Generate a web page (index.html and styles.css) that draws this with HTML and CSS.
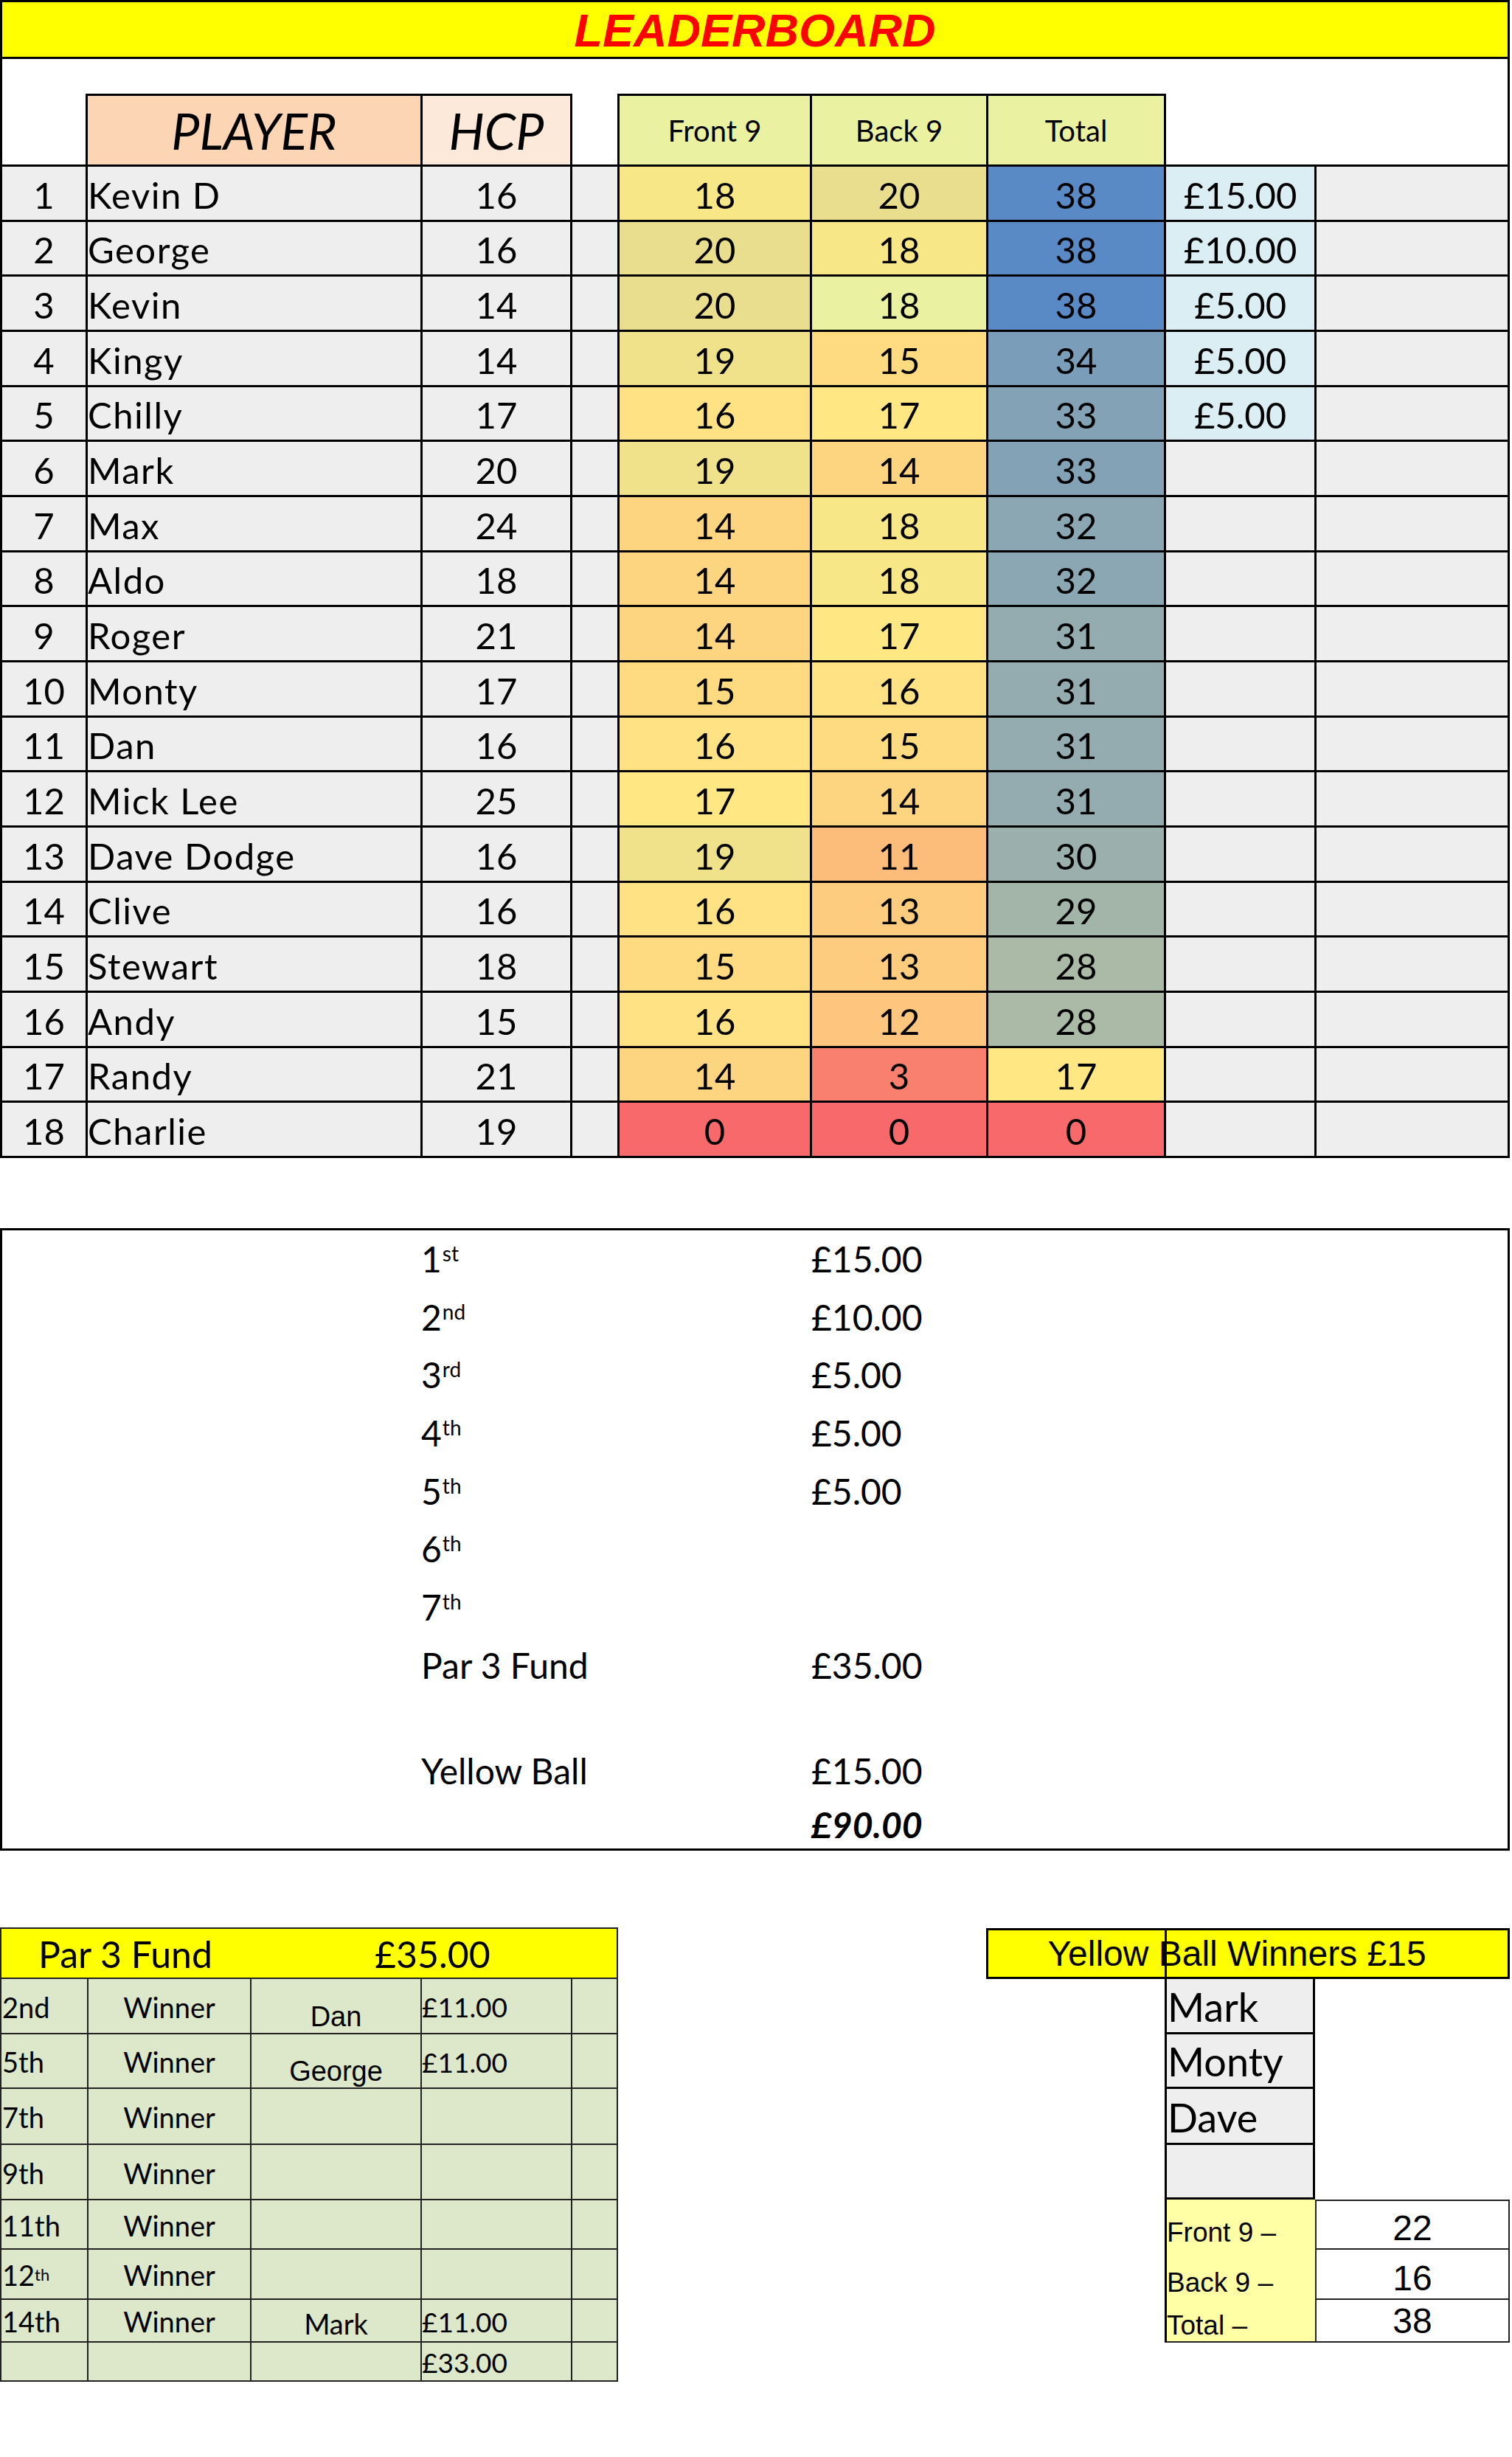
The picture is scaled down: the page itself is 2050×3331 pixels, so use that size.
FILE: index.html
```html
<!DOCTYPE html>
<html lang="en">
<head>
<meta charset="utf-8">
<title>Leaderboard</title>
<link rel="stylesheet" href="styles.css">
</head>
<body>
<div class="page">
  <section class="board">
    <div class="title">LEADERBOARD</div>
    <div class="head">
      <div></div>
      <div class="h-player">PLAYER</div>
      <div class="h-hcp">HCP</div>
      <div class="h-line"></div>
      <div class="h-score">Front 9</div>
      <div class="h-score">Back 9</div>
      <div class="h-score">Total</div>
      <div class="h-line"></div>
      <div></div>
    </div>
    <div class="rows">
      <div class="row"><div>1</div><div class="name">Kevin D</div><div>16</div><div></div><div class="s18">18</div><div class="s20">20</div><div class="t38">38</div><div class="prize">£15.00</div><div></div></div>
      <div class="row"><div>2</div><div class="name">George</div><div>16</div><div></div><div class="s20">20</div><div class="s18">18</div><div class="t38">38</div><div class="prize">£10.00</div><div></div></div>
      <div class="row"><div>3</div><div class="name">Kevin</div><div>14</div><div></div><div class="s20">20</div><div class="s18g">18</div><div class="t38">38</div><div class="prize">£5.00</div><div></div></div>
      <div class="row"><div>4</div><div class="name">Kingy</div><div>14</div><div></div><div class="s19">19</div><div class="s15">15</div><div class="t34">34</div><div class="prize">£5.00</div><div></div></div>
      <div class="row"><div>5</div><div class="name">Chilly</div><div>17</div><div></div><div class="s16">16</div><div class="s17">17</div><div class="t33">33</div><div class="prize">£5.00</div><div></div></div>
      <div class="row"><div>6</div><div class="name">Mark</div><div>20</div><div></div><div class="s19">19</div><div class="s14">14</div><div class="t33">33</div><div></div><div></div></div>
      <div class="row"><div>7</div><div class="name">Max</div><div>24</div><div></div><div class="s14">14</div><div class="s18">18</div><div class="t32">32</div><div></div><div></div></div>
      <div class="row"><div>8</div><div class="name">Aldo</div><div>18</div><div></div><div class="s14">14</div><div class="s18">18</div><div class="t32">32</div><div></div><div></div></div>
      <div class="row"><div>9</div><div class="name">Roger</div><div>21</div><div></div><div class="s14">14</div><div class="s17">17</div><div class="t31">31</div><div></div><div></div></div>
      <div class="row"><div>10</div><div class="name">Monty</div><div>17</div><div></div><div class="s15">15</div><div class="s16">16</div><div class="t31">31</div><div></div><div></div></div>
      <div class="row"><div>11</div><div class="name">Dan</div><div>16</div><div></div><div class="s16">16</div><div class="s15">15</div><div class="t31">31</div><div></div><div></div></div>
      <div class="row"><div>12</div><div class="name">Mick Lee</div><div>25</div><div></div><div class="s17">17</div><div class="s14">14</div><div class="t31">31</div><div></div><div></div></div>
      <div class="row"><div>13</div><div class="name">Dave Dodge</div><div>16</div><div></div><div class="s19">19</div><div class="s11">11</div><div class="t30">30</div><div></div><div></div></div>
      <div class="row"><div>14</div><div class="name">Clive</div><div>16</div><div></div><div class="s16">16</div><div class="s13">13</div><div class="t29">29</div><div></div><div></div></div>
      <div class="row"><div>15</div><div class="name">Stewart</div><div>18</div><div></div><div class="s15">15</div><div class="s13">13</div><div class="t28">28</div><div></div><div></div></div>
      <div class="row"><div>16</div><div class="name">Andy</div><div>15</div><div></div><div class="s16">16</div><div class="s12">12</div><div class="t28">28</div><div></div><div></div></div>
      <div class="row"><div>17</div><div class="name">Randy</div><div>21</div><div></div><div class="s14">14</div><div class="s3">3</div><div class="t17">17</div><div></div><div></div></div>
      <div class="row"><div>18</div><div class="name">Charlie</div><div>19</div><div></div><div class="s0">0</div><div class="s0">0</div><div class="s0">0</div><div></div><div></div></div>
    </div>
  </section>

  <section class="summary">
    <div class="sum-row"><span>1<sup>st</sup></span><span>£15.00</span></div>
    <div class="sum-row"><span>2<sup>nd</sup></span><span>£10.00</span></div>
    <div class="sum-row"><span>3<sup>rd</sup></span><span>£5.00</span></div>
    <div class="sum-row"><span>4<sup>th</sup></span><span>£5.00</span></div>
    <div class="sum-row"><span>5<sup>th</sup></span><span>£5.00</span></div>
    <div class="sum-row"><span>6<sup>th</sup></span><span></span></div>
    <div class="sum-row"><span>7<sup>th</sup></span><span></span></div>
    <div class="sum-row"><span>Par 3 Fund</span><span>£35.00</span></div>
    <div class="sum-gap"></div>
    <div class="sum-row"><span>Yellow Ball</span><span>£15.00</span></div>
    <div class="sum-row sum-total"><span></span><span>£90.00</span></div>
  </section>

  <section class="bottom">
    <div class="p3">
      <div class="p3-head"><span class="p3-label">Par 3 Fund</span><span>£35.00</span></div>
      <div class="p3-row r1"><div class="hole">2nd</div><div class="win">Winner</div><div class="who arial">Dan</div><div class="amt">£11.00</div><div></div></div>
      <div class="p3-row r2"><div class="hole">5th</div><div class="win">Winner</div><div class="who arial">George</div><div class="amt">£11.00</div><div></div></div>
      <div class="p3-row r3"><div class="hole">7th</div><div class="win">Winner</div><div></div><div></div><div></div></div>
      <div class="p3-row r4"><div class="hole">9th</div><div class="win">Winner</div><div></div><div></div><div></div></div>
      <div class="p3-row r5"><div class="hole">11th</div><div class="win">Winner</div><div></div><div></div><div></div></div>
      <div class="p3-row r6"><div class="hole">12<sup>th</sup></div><div class="win">Winner</div><div></div><div></div><div></div></div>
      <div class="p3-row r7"><div class="hole">14th</div><div class="win">Winner</div><div class="who">Mark</div><div class="amt">£11.00</div><div></div></div>
      <div class="p3-row r8"><div></div><div></div><div></div><div class="amt">£33.00</div><div></div></div>
    </div>

    <div class="yb">
      <div class="yb-head">Yellow Ball Winners £15</div>
      <div class="yb-row n1"><div></div><div class="yb-name">Mark</div><div></div></div>
      <div class="yb-row n2"><div></div><div class="yb-name">Monty</div><div></div></div>
      <div class="yb-row n3"><div></div><div class="yb-name">Dave</div><div></div></div>
      <div class="yb-row n4"><div></div><div class="yb-name"></div><div></div></div>
      <div class="yb-row v1"><div></div><div class="yb-lab">Front 9 –</div><div class="yb-val first">22</div></div>
      <div class="yb-row v2"><div></div><div class="yb-lab">Back 9 –</div><div class="yb-val">16</div></div>
      <div class="yb-row v3"><div></div><div class="yb-lab last">Total –</div><div class="yb-val">38</div></div>
    </div>
  </section>
</div>
</body>
</html>
```

FILE: styles.css
```css
html, body {
  margin: 0;
  padding: 0;
  background: #ffffff;
}

body {
  font-family: Lato, "Liberation Sans", sans-serif;
  color: #000;
}

.page {
  width: 2047px;
}

/* ---------- Leaderboard ---------- */
.board {
  border-left: 3px solid #000;
  border-right: 3px solid #000;
}

.title {
  height: 80px;
  box-sizing: border-box;
  border-top: 3px solid #000;
  border-bottom: 3px solid #000;
  background: #ffff00;
  color: #ff0000;
  font-family: "Liberation Sans", Arial, sans-serif;
  font-style: italic;
  font-weight: bold;
  font-size: 63px;
  display: flex;
  align-items: center;
  justify-content: center;
  padding-top: 2px;
}

.head,
.row {
  display: grid;
  grid-template-columns: 113px 454px 203px 64px 261px 239px 241px 204px 1fr;
}

.head {
  height: 143px;
  align-items: end;
}

.head > div {
  height: 96px;
  box-sizing: border-box;
  display: flex;
  align-items: center;
  justify-content: center;
  white-space: nowrap;
}

.h-player,
.h-hcp {
  border-top: 3px solid #000;
  border-left: 3px solid #000;
  font-style: italic;
  font-size: 68px;
}

.h-player { background: #fcd5b4; }
.h-hcp { background: #fde9d9; }

.h-line {
  border-left: 3px solid #000;
}

.h-score {
  border-top: 3px solid #000;
  border-left: 3px solid #000;
  background: #eaf2a2;
  font-size: 40px;
}

.rows {
  border-top: 3px solid #000;
}

.row {
  height: 74.67px;
  box-sizing: border-box;
  border-bottom: 3px solid #000;
}

.row > div {
  display: flex;
  align-items: center;
  justify-content: center;
  padding-top: 4px;
  box-sizing: border-box;
  background: #eeeeee;
  font-size: 49px;
  white-space: nowrap;
}

.row > div + div {
  border-left: 3px solid #000;
}

.row > .name {
  justify-content: flex-start;
  letter-spacing: 1.5px;
}

.row > .prize {
  background: #daeef3;
}

/* colour scale: front / back 9 */
.row > .s20 { background: #e9de8d; }
.row > .s19 { background: #f0e28a; }
.row > .s18 { background: #f8e787; }
.row > .s18g { background: #eaf2a1; }
.row > .s17 { background: #ffe884; }
.row > .s16 { background: #fee283; }
.row > .s15 { background: #feda81; }
.row > .s14 { background: #fdd480; }
.row > .s13 { background: #fdcc7e; }
.row > .s12 { background: #fdc57d; }
.row > .s11 { background: #fcbd7b; }
.row > .s3 { background: #f9806f; }
.row > .s0 { background: #f8696b; }

/* colour scale: total */
.row > .t38 { background: #5a8ac6; }
.row > .t34 { background: #7a9db9; }
.row > .t33 { background: #83a2b6; }
.row > .t32 { background: #8ba7b3; }
.row > .t31 { background: #94abaf; }
.row > .t30 { background: #9bb0ac; }
.row > .t29 { background: #a3b5a9; }
.row > .t28 { background: #abbaa6; }
.row > .t17 { background: #ffe784; }

/* ---------- Prize summary ---------- */
.summary {
  margin-top: 95px;
  height: 844px;
  box-sizing: border-box;
  border: 3px solid #000;
  padding-left: 568px;
  font-size: 48px;
}

.sum-row {
  display: grid;
  grid-template-columns: 529px auto;
  height: 78.7px;
  line-height: 78.7px;
  white-space: nowrap;
}

.sum-row sup {
  font-size: 28px;
  line-height: 0;
  vertical-align: 15px;
  margin-left: 1px;
}

.sum-gap {
  height: 64.5px;
}

.sum-total {
  margin-top: -6px;
  font-weight: bold;
  font-style: italic;
}

/* ---------- Bottom tables ---------- */
.bottom {
  margin-top: 104px;
  display: flex;
  align-items: flex-start;
}

.p3 {
  width: 838px;
  box-sizing: border-box;
  border: 2px solid #222;
  border-bottom: none;
}

.p3-head {
  height: 68px;
  box-sizing: border-box;
  border-bottom: 2px solid #222;
  background: #ffff00;
  display: flex;
  align-items: center;
  padding-left: 50px;
  padding-top: 3px;
  font-size: 50px;
  white-space: nowrap;
}

.p3-label {
  width: 456px;
}

.p3-row {
  display: grid;
  grid-template-columns: 116px 221px 231px 204px 1fr;
  box-sizing: border-box;
  border-bottom: 2px solid #222;
  background: #dde7c9;
}

.p3-row > div {
  display: flex;
  align-items: center;
  padding-top: 3px;
  box-sizing: border-box;
  font-size: 38px;
  white-space: nowrap;
}

.p3-row > div + div {
  border-left: 2px solid #222;
}

.p3-row .hole {
  padding-left: 1px;
}

.p3-row .hole sup {
  font-size: 22px;
  line-height: 0;
  vertical-align: 13px;
}

.p3-row .win {
  justify-content: center;
}

.p3-row .who {
  justify-content: center;
  align-items: flex-end;
  padding-top: 0;
  padding-bottom: 1px;
}

.p3-row .who.arial {
  font-family: "Liberation Sans", Arial, sans-serif;
  padding-bottom: 0;
}

.p3-row .amt {
  font-size: 37px;
}

.p3-row.r1 { height: 75px; }
.p3-row.r2 { height: 74px; }
.p3-row.r3 { height: 76px; }
.p3-row.r4 { height: 75px; }
.p3-row.r5 { height: 67px; }
.p3-row.r6 { height: 68px; }
.p3-row.r7 { height: 58px; }
.p3-row.r8 { height: 53px; }

.yb {
  width: 710px;
  margin-left: auto;
  margin-top: 1px;
  font-family: "Liberation Sans", Arial, sans-serif;
}

.yb-head {
  position: relative;
  height: 69px;
  box-sizing: border-box;
  border: 3px solid #000;
  background: #ffff00;
  display: flex;
  align-items: center;
  justify-content: center;
  padding-right: 30px;
  font-size: 48px;
  white-space: nowrap;
}

.yb-head::after {
  content: "";
  position: absolute;
  left: 239px;
  top: 0;
  bottom: 0;
  width: 3px;
  background: #000;
}

.yb-row {
  display: grid;
  grid-template-columns: 242px 204px 264px;
}

.yb-row > div {
  box-sizing: border-box;
  display: flex;
  align-items: flex-end;
  white-space: nowrap;
}

.yb-row.n1 { height: 75px; }
.yb-row.n2 { height: 74px; }
.yb-row.n3 { height: 76px; }
.yb-row.n4 { height: 74px; }
.yb-row.v1 { height: 68px; }
.yb-row.v2 { height: 68px; }
.yb-row.v3 { height: 58px; }

.yb-name {
  background: #eeeeee;
  border-left: 3px solid #000;
  border-right: 3px solid #000;
  border-bottom: 3px solid #000;
  font-family: Lato, sans-serif;
  font-size: 54px;
  padding-left: 1px;
  padding-bottom: 2px;
}

.yb-lab {
  background: #ffffa6;
  border-left: 3px solid #000;
  font-size: 37px;
  padding-bottom: 2px;
}

.yb-lab.last {
  border-bottom: 2px solid #222;
  padding-bottom: 0;
}

.yb-val {
  justify-content: center;
  border-left: 2px solid #222;
  border-right: 2px solid #222;
  border-bottom: 2px solid #222;
  font-size: 48px;
}

.yb-val.first {
  border-top: 2px solid #222;
}
```
